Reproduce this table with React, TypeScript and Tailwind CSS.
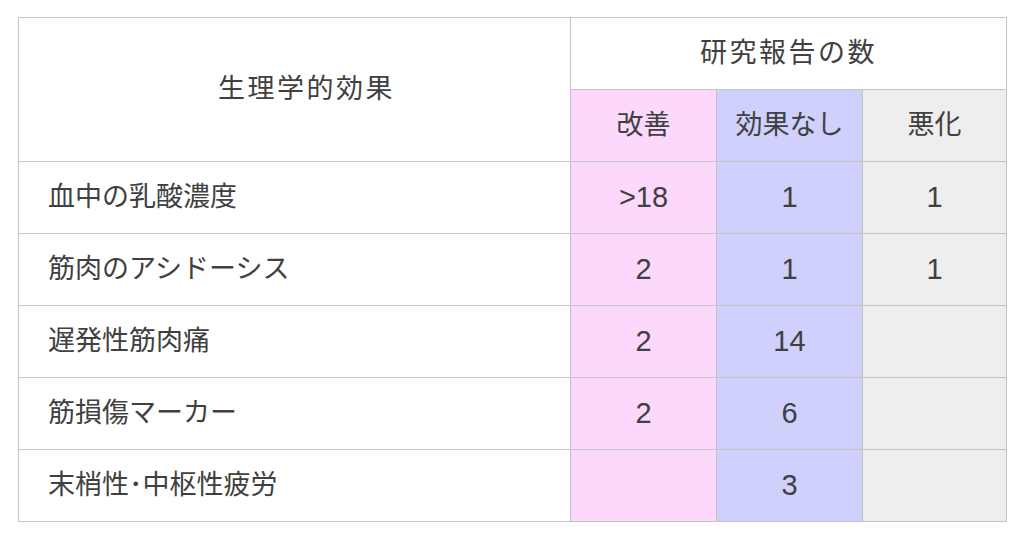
const ROWS: Array<{ label: string; better: string; none: string; worse: string }> = [
  { label: '血中の乳酸濃度', better: '>18', none: '1', worse: '1' },
  { label: '筋肉のアシドーシス', better: '2', none: '1', worse: '1' },
  { label: '遅発性筋肉痛', better: '2', none: '14', worse: '' },
  { label: '筋損傷マーカー', better: '2', none: '6', worse: '' },
  { label: '末梢性･中枢性疲労', better: '', none: '3', worse: '' },
];

const cell = 'border-[1.5px] border-[#c4c4c4] h-[72px] p-0';

export default function App() {
  return (
    <div
      className="h-[541px] w-[1024px] bg-white pl-[18px] pt-[17px] text-[#404040]"
      style={{ fontFamily: '"Liberation Sans", "Noto Sans CJK JP", sans-serif' }}
    >
      <table className="w-[988px] table-fixed border-collapse text-[27px] leading-none">
        <colgroup>
          <col className="w-[552px]" />
          <col className="w-[146px]" />
          <col className="w-[146px]" />
          <col className="w-[144px]" />
        </colgroup>
        <thead>
          <tr>
            <th rowSpan={2} className={`${cell} pl-[24px] text-center font-normal tracking-[2.5px]`}>
              生理学的効果
            </th>
            <th colSpan={3} className={`${cell} text-center font-normal tracking-[2.5px]`}>
              研究報告の数
            </th>
          </tr>
          <tr>
            <th className={`${cell} bg-[#fcd8fc] text-center font-normal`}>改善</th>
            <th className={`${cell} bg-[#d0d0fc] text-center font-normal`}>効果なし</th>
            <th className={`${cell} bg-[#eeeeee] text-center font-normal`}>悪化</th>
          </tr>
        </thead>
        <tbody>
          {ROWS.map((row) => (
            <tr key={row.label}>
              <td className={`${cell} pl-[29px] text-left`}>{row.label}</td>
              <td className={`${cell} bg-[#fcd8fc] text-center text-[29px]`}>{row.better}</td>
              <td className={`${cell} bg-[#d0d0fc] text-center text-[29px]`}>{row.none}</td>
              <td className={`${cell} bg-[#eeeeee] text-center text-[29px]`}>{row.worse}</td>
            </tr>
          ))}
        </tbody>
      </table>
    </div>
  );
}
